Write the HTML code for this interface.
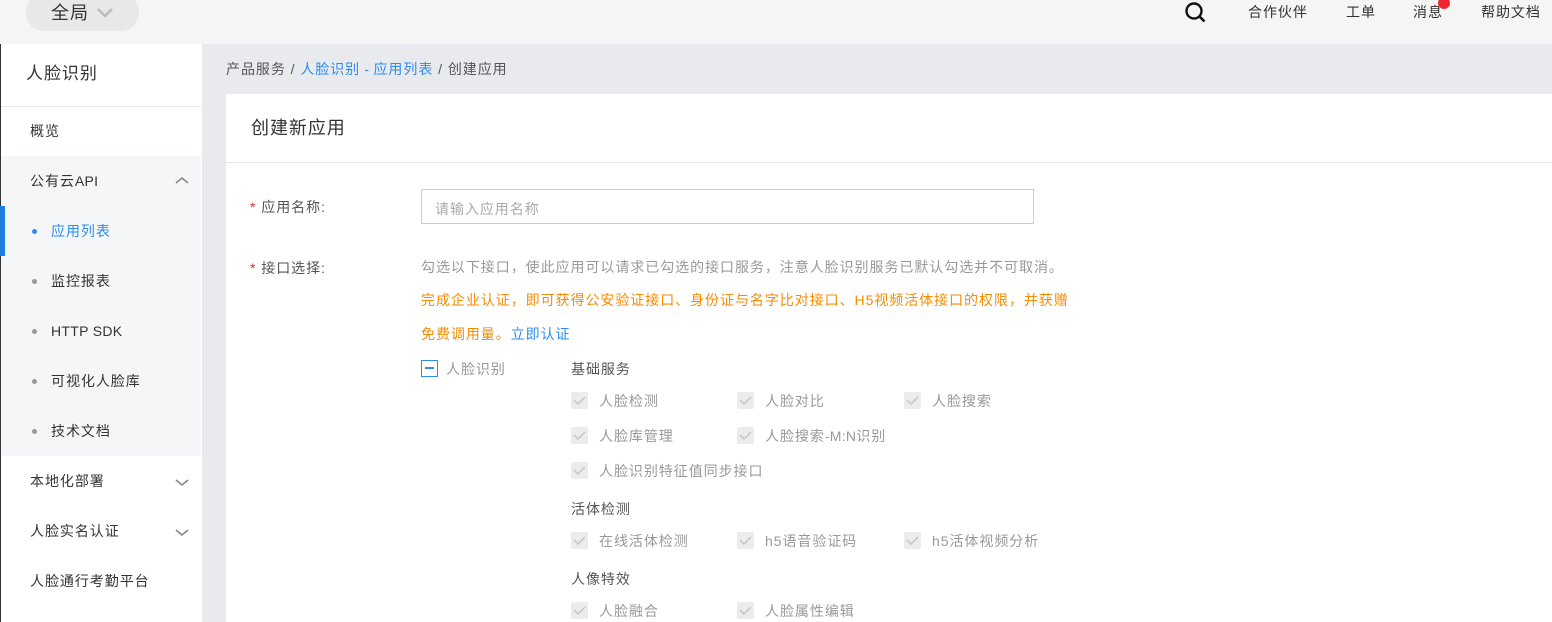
<html><head><style>
body{margin:0;width:1552px;height:622px;overflow:hidden;font-family:"Liberation Sans","Noto Sans CJK SC",sans-serif;font-size:14px;color:#333;background:#e8eaee;position:relative;letter-spacing:0.95px}
.a{position:absolute;white-space:nowrap}
.hdr{left:0;top:0;width:1552px;height:44px;background:#f5f5f5}
.side{left:0;top:44px;width:201px;height:578px;background:#fff;border-left:1px solid #333}
.it{position:absolute;left:0;width:200px;height:50px;line-height:50px}
.cb{position:absolute;width:17px;height:17px;background:#ececec;border-radius:2px}
.cb svg{position:absolute;left:2px;top:3px}
.g{color:#999}
.l{letter-spacing:0.3px}
</style></head><body>
<div class="a hdr"></div>
<div class="a" style="left:26px;top:-6px;width:113px;height:37px;border-radius:18px;background:#e8e8e8"></div>
<div class="a" style="left:51px;top:2px;font-size:18px;line-height:22px">全局</div>
<svg class="a" style="left:97px;top:8px" width="16" height="10"><path d="M1 1l7 7 7-7" stroke="#bbb" stroke-width="2.5" fill="none"/></svg>
<svg class="a" style="left:1184px;top:1px" width="24" height="22"><circle cx="10" cy="10" r="7.5" stroke="#111" stroke-width="2.4" fill="none"/><path d="M15.5 15.5l5 5" stroke="#111" stroke-width="2.6"/></svg>
<div class="a" style="left:1248px;top:3px;line-height:18px">合作伙伴</div>
<div class="a" style="left:1346px;top:3px;line-height:18px">工单</div>
<div class="a" style="left:1413px;top:3px;line-height:18px">消息</div>
<div class="a" style="left:1438px;top:-3px;width:12px;height:12px;border-radius:6px;background:#f0262e"></div>
<div class="a" style="left:1481px;top:3px;line-height:18px">帮助文档</div>

<div class="a side">
<div class="it" style="top:5px;height:56px;line-height:50px;font-size:17px;padding-left:25px;box-sizing:border-box">人脸识别</div>
<div class="a" style="left:0;top:62px;width:200px;height:1px;background:#e8e8e8"></div>
<div class="it" style="top:62px;padding-left:29px">概览</div>
<div class="a" style="left:0;top:112px;width:200px;height:300px;background:#f5f6f8"></div>
<div class="it" style="top:112px;padding-left:29px">公有云<span class="l">API</span></div>
<svg class="a" style="left:174px;top:132px" width="14" height="9"><path d="M1 7l6-5 6 5" stroke="#888" stroke-width="1.6" fill="none"/></svg>
<div class="a" style="left:-1px;top:162px;width:5px;height:50px;background:#1e7fe0"></div>
<div class="a" style="left:31px;top:185px;width:5px;height:5px;border-radius:3px;background:#2d8cf0"></div>
<div class="it" style="top:162px;padding-left:50px;color:#2d8cf0">应用列表</div>
<div class="a" style="left:31px;top:235px;width:5px;height:5px;border-radius:3px;background:#999"></div>
<div class="it" style="top:212px;padding-left:50px">监控报表</div>
<div class="a" style="left:31px;top:285px;width:5px;height:5px;border-radius:3px;background:#999"></div>
<div class="it l" style="top:262px;padding-left:50px">HTTP SDK</div>
<div class="a" style="left:31px;top:335px;width:5px;height:5px;border-radius:3px;background:#999"></div>
<div class="it" style="top:312px;padding-left:50px">可视化人脸库</div>
<div class="a" style="left:31px;top:385px;width:5px;height:5px;border-radius:3px;background:#999"></div>
<div class="it" style="top:362px;padding-left:50px">技术文档</div>
<div class="it" style="top:412px;padding-left:29px">本地化部署</div>
<svg class="a" style="left:174px;top:434px" width="14" height="9"><path d="M1 2l6 5 6-5" stroke="#888" stroke-width="1.6" fill="none"/></svg>
<div class="it" style="top:462px;padding-left:29px">人脸实名认证</div>
<svg class="a" style="left:174px;top:484px" width="14" height="9"><path d="M1 2l6 5 6-5" stroke="#888" stroke-width="1.6" fill="none"/></svg>
<div class="it" style="top:512px;padding-left:29px">人脸通行考勤平台</div>
</div>

<div class="a" style="left:226px;top:60px;color:#555;line-height:18px">产品服务 / <span style="color:#2d8cf0">人脸识别<span class="l"> - </span>应用列表</span> / 创建应用</div>
<div class="a" style="left:226px;top:94px;width:1326px;height:528px;background:#fff"></div>
<div class="a" style="left:226px;top:162px;width:1326px;height:1px;background:#e8e8e8"></div>
<div class="a" style="left:251px;top:117px;font-size:18px;line-height:22px">创建新应用</div>

<div class="a" style="left:250px;top:197px;color:#555"><span style="color:#f0262e">*</span> 应用名称:</div>
<div class="a" style="left:421px;top:189px;width:611px;height:33px;border:1px solid #ccc"></div>
<div class="a" style="left:435px;top:199px;color:#aaa">请输入应用名称</div>
<div class="a" style="left:250px;top:258px;color:#555"><span style="color:#f0262e">*</span> 接口选择:</div>
<div class="a g" style="left:421px;top:257px">勾选以下接口，使此应用可以请求已勾选的接口服务，注意人脸识别服务已默认勾选并不可取消。</div>
<div class="a" style="left:421px;top:290px;color:#f68b00">完成企业认证，即可获得公安验证接口、身份证与名字比对接口、H5视频活体接口的权限，并获赠</div>
<div class="a" style="left:421px;top:324px;color:#f68b00">免费调用量。<span style="color:#2d8cf0">立即认证</span></div>
<div class="a" style="left:421px;top:360px;width:17px;height:17px;border:1.5px solid #2d8cf0;box-sizing:border-box"></div>
<div class="a" style="left:425px;top:367px;width:9px;height:2px;background:#2d8cf0"></div>
<div class="a g" style="left:446px;top:359px">人脸识别</div>
<div class="a" style="left:571px;top:359px;color:#555">基础服务</div>
<div class="a" style="left:571px;top:499px;color:#555">活体检测</div>
<div class="a" style="left:571px;top:569px;color:#555">人像特效</div>

<div id="cbs"></div>
<script>
var items=[[571,392,"人脸检测"],[737,392,"人脸对比"],[904,392,"人脸搜索"],[571,427,"人脸库管理"],[737,427,"人脸搜索<span class=l>-M:N</span>识别"],[571,462,"人脸识别特征值同步接口"],[571,532,"在线活体检测"],[737,532,"h5语音验证码"],[904,532,"h5活体视频分析"],[571,602,"人脸融合"],[737,602,"人脸属性编辑"]];
var h="";items.forEach(function(i){h+='<div class="cb" style="left:'+i[0]+'px;top:'+i[1]+'px"><svg width="13" height="11"><path d="M1 5l4 4 7-7" stroke="#c8c8c8" stroke-width="1.6" fill="none"/></svg></div><div class="a g" style="left:'+(i[0]+28)+'px;top:'+(i[1]-1)+'px">'+i[2]+'</div>'});
document.getElementById("cbs").innerHTML=h;
</script>
</body></html>
